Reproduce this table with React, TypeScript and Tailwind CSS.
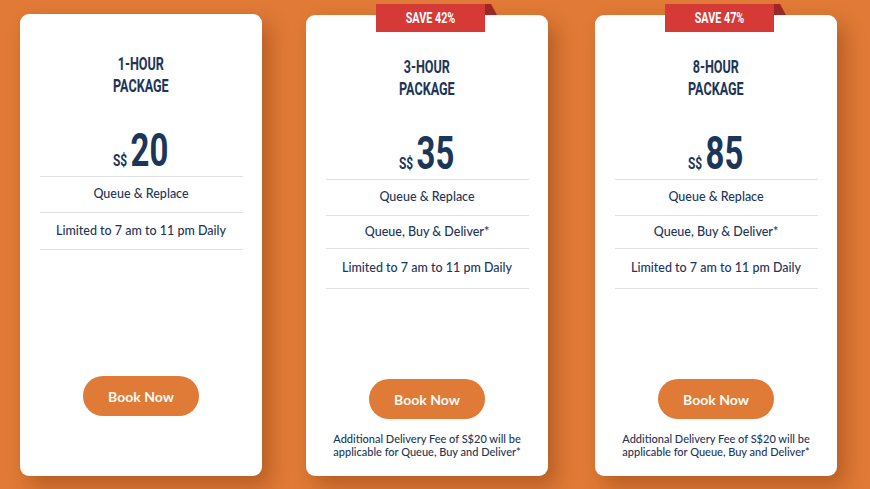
import React from 'react'

const navy = 'text-[#1c3659]'

type Plan = {
  hours: string
  price: string
  save?: string
  features: { label: string; h: string }[]
  note?: boolean
}

const plans: Plan[] = [
  {
    hours: '1-HOUR',
    price: '20',
    features: [
      { label: 'Queue & Replace', h: 'h-[36px]' },
      { label: 'Limited to 7 am to 11 pm Daily', h: 'h-[37px]' },
    ],
  },
  {
    hours: '3-HOUR',
    price: '35',
    save: 'SAVE 42%',
    note: true,
    features: [
      { label: 'Queue & Replace', h: 'h-[36px]' },
      { label: 'Queue, Buy & Deliver*', h: 'h-[33px]' },
      { label: 'Limited to 7 am to 11 pm Daily', h: 'h-[40px]' },
    ],
  },
  {
    hours: '8-HOUR',
    price: '85',
    save: 'SAVE 47%',
    note: true,
    features: [
      { label: 'Queue & Replace', h: 'h-[36px]' },
      { label: 'Queue, Buy & Deliver*', h: 'h-[33px]' },
      { label: 'Limited to 7 am to 11 pm Daily', h: 'h-[40px]' },
    ],
  },
]

function Card({ plan, first }: { plan: Plan; first?: boolean }) {
  return (
    <div
      className={`relative flex w-[242px] flex-col items-center rounded-[9px] bg-white shadow-[8px_10px_20px_rgba(120,50,10,0.4)] ${
        first ? 'mt-[14px] pt-[39px]' : 'mt-[15px] pt-[41px]'
      }`}
    >
      {plan.save && (
        <div className="absolute left-[70px] top-[-11px]">
          <div className="flex h-[28px] w-[109px] items-center justify-center bg-[#d63a36] font-['Roboto',sans-serif] text-[15px] font-bold text-white">
            <span className="inline-block scale-x-[0.72]">{plan.save}</span>
          </div>
          <svg className="absolute left-[109px] top-0" width="12" height="11" viewBox="0 0 12 11">
            <polygon points="0,0 6,0 12,11 0,11" fill="#9c2723" />
          </svg>
        </div>
      )}

      <div className={`font-['Roboto',sans-serif] text-[18px] font-bold leading-[22px] ${navy} text-center`}>
        <div className="inline-block scale-x-[0.7]">
          {plan.hours}
          <br />
          PACKAGE
        </div>
      </div>

      <div className={`mt-[29px] font-['Roboto',sans-serif] font-bold ${navy}`}>
        <div className="inline-flex scale-x-[0.7] items-baseline">
          <span className="mr-[5px] text-[17px] leading-none">S$</span>
          <span className="text-[47px] leading-[47px]">{plan.price}</span>
        </div>
      </div>

      <ul className="mt-[3px] w-[203px] border-t border-[#dde0e4] font-['Lato',sans-serif] text-[12.5px] font-medium text-[#1e3658]">
        {plan.features.map((f) => (
          <li key={f.label} className={`flex items-center justify-center border-b border-[#dde0e4] ${f.h}`}>
            {f.label}
          </li>
        ))}
      </ul>

      <div className={`mt-auto flex flex-col items-center ${plan.note ? 'pb-[18px]' : 'pb-[60px]'}`}>
        <button className="flex h-[40px] w-[116px] items-center justify-center rounded-full bg-[#df7a37] font-['Lato',sans-serif] text-[14px] font-bold text-[#fffaf3]">
          Book Now
        </button>
        {plan.note && (
          <p className="mt-[13px] text-center font-['Lato',sans-serif] text-[11px] font-medium leading-[13px] text-[#1e3658]">
            Additional Delivery Fee of S$20 will be
            <br />
            applicable for Queue, Buy and Deliver*
          </p>
        )}
      </div>
    </div>
  )
}

export default function App() {
  return (
    <div className="flex h-[489px] w-[870px] items-start overflow-hidden bg-[#e07a36] pl-[20px]">
      <div className="flex h-[476px] gap-[44px]">
        {plans.map((p, i) => (
          <div key={p.hours} className={`flex ${i === 2 ? 'ml-[3px]' : ''}`}>
            <Card plan={p} first={i === 0} />
          </div>
        ))}
      </div>
    </div>
  )
}
